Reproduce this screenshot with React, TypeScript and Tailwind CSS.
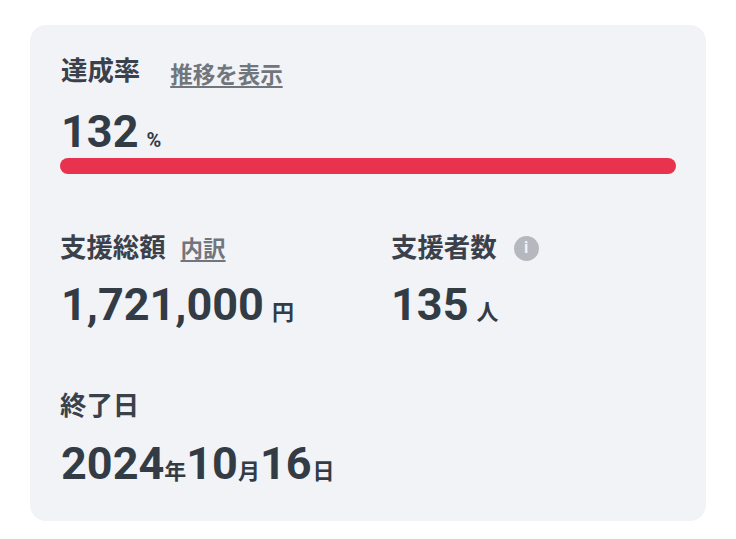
const font = "font-['Roboto','Noto_Sans_CJK_JP',sans-serif]";

function Label({ children }: { children: React.ReactNode }) {
  return <span className="text-[26.4px] leading-[36px] font-bold text-[#3a414b]">{children}</span>;
}

export default function App() {
  return (
    <div className={`${font} min-h-[539px] bg-white pt-[25px] px-[30px] text-[#333b45]`}>
      <div className="h-[496px] w-[676px] rounded-[16px] bg-[#f1f3f7] px-[30px] pt-[28px]">
        <div className="ml-[1px] flex h-[36px] items-center">
          <Label>達成率</Label>
          <a className="ml-[30px] mt-[9px] text-[22.5px] font-bold text-[#71767d] underline underline-offset-[3px]">推移を表示</a>
        </div>
        <div className="mt-[9px] flex h-[46px] items-baseline">
          <span className="ml-[1px] text-[45px] font-bold">132</span>
          <span className="ml-[8px] text-[20px] font-bold">%</span>
        </div>
        <div className="mt-[14px] h-[16px] w-[616px] rounded-full bg-[#e8334f]" />
        <div className="mt-[56px] flex">
          <div className="w-[331px]">
            <div className="flex h-[36px] items-center">
              <Label>支援総額</Label>
              <a className="ml-[15px] mt-[3px] text-[22.5px] font-bold text-[#71767d] underline underline-offset-[3px]">内訳</a>
            </div>
            <div className="mt-[12px] flex items-baseline">
              <span className="ml-[1px] text-[45px] leading-[54px] font-bold">1,721,000</span>
              <span className="ml-[8px] text-[22px] font-bold">円</span>
            </div>
          </div>
          <div>
            <div className="flex h-[36px] items-center">
              <Label>支援者数</Label>
              <span className="ml-[17px] flex h-[25px] w-[25px] items-center justify-center rounded-full bg-[#b5b8be] text-[16px] font-bold text-[#f1f3f7]">i</span>
            </div>
            <div className="mt-[12px] flex items-baseline">
              <span className="text-[45px] leading-[54px] font-bold">135</span>
              <span className="ml-[8px] text-[22px] font-bold">人</span>
            </div>
          </div>
        </div>
        <div className="mt-[56px]">
          <Label>終了日</Label>
          <div className="mt-[13px] flex items-baseline">
            <span className="ml-[1px] text-[45px] leading-[54px] font-bold">2024</span>
            <span className="text-[22px] font-bold">年</span>
            <span className="text-[45px] leading-[54px] font-bold">10</span>
            <span className="text-[22px] font-bold">月</span>
            <span className="text-[45px] leading-[54px] font-bold">16</span>
            <span className="ml-[1px] text-[22px] font-bold">日</span>
          </div>
        </div>
      </div>
    </div>
  );
}
